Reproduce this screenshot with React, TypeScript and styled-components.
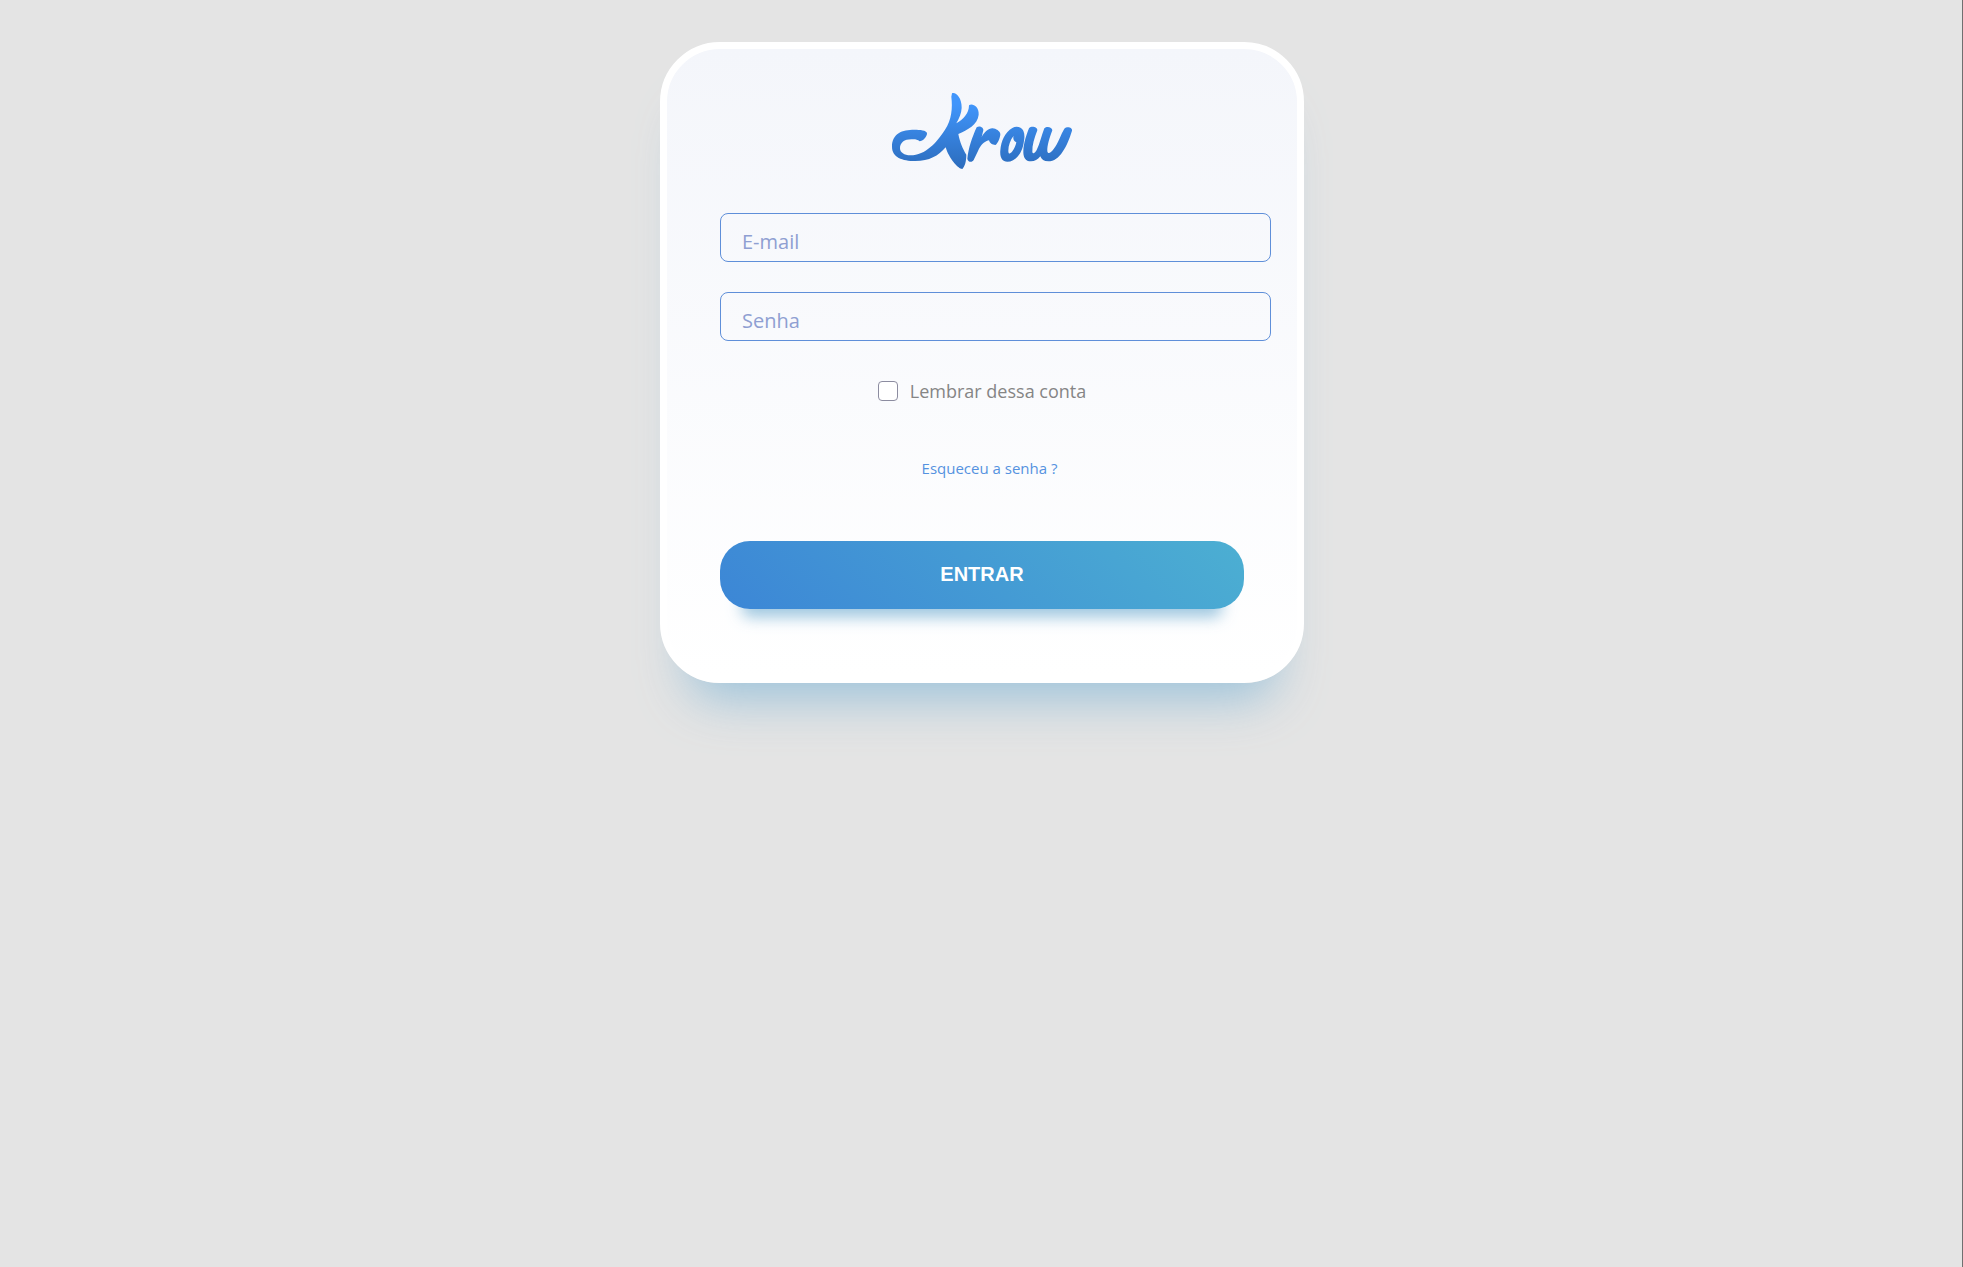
import React from "react";
import styled, { createGlobalStyle } from "styled-components";

const GlobalStyle = createGlobalStyle`
  * { box-sizing: border-box; }
  body { margin: 0; background: #e4e4e4; font-family: "Open Sans", "Noto Sans", sans-serif; }
`;

const Page = styled.main`
  min-height: 100vh;
  padding: 42px 15px 42px 17px;
  border-right: 1px solid #707070;
`;

const Card = styled.section`
  width: 100%;
  max-width: 644px;
  margin: 0 auto;
  padding: 31px 53px 67px;
  border: 7px solid #fff;
  border-radius: 60px;
  background: linear-gradient(0deg, #fff 0%, #f4f6fb 100%);
  box-shadow: 0 44px 48px -28px rgba(133, 184, 215, 0.75);
`;

const Logo = styled.svg`
  display: block;
  width: 200px;
  height: 100px;
  margin: 0 auto;
`;

const Form = styled.form`
  display: flex;
  flex-direction: column;
  margin-top: 33px;
`;

const Field = styled.input`
  height: 49px;
  margin: 0 -27px 30px 0;
  padding: 7px 21px 0;
  border: 1px solid #5f8fd9;
  border-radius: 8px;
  background: transparent;
  color: #3c5a99;
  font: 20px "Open Sans", "Noto Sans", sans-serif;

  &::placeholder {
    color: #8f9fd2;
    opacity: 1;
  }
`;

const Remember = styled.label`
  display: flex;
  align-items: center;
  justify-content: center;
  gap: 12px;
  height: 40px;
  color: #858585;
  font-size: 18px;
`;

const Check = styled.input`
  appearance: none;
  width: 20px;
  height: 20px;
  margin: 0;
  border: 1px solid #8c8ca0;
  border-radius: 4px;
  background: #fff;

  &:checked { background: #3d87d6; }
`;

const Forgot = styled.a`
  align-self: center;
  margin: 45px 0 0 15px;
  color: #5592e0;
  font-size: 15px;
  line-height: 24px;
  text-decoration: none;
`;

const Submit = styled.button`
  height: 68px;
  margin-top: 61px;
  padding: 0 0 2px;
  border: 0;
  border-radius: 30px;
  background: linear-gradient(45deg, #3c86d6 0%, #4cafd2 100%);
  box-shadow: 0 30px 15px -22px rgba(133, 184, 215, 0.8);
  color: #fff;
  font: bold 20px "Liberation Sans", Arial, sans-serif;
`;

export default function App() {
  return (
    <>
      <GlobalStyle />
      <Page>
        <Card>
          <Logo viewBox="6 0 600 300" role="img" aria-label="Krow">
            <defs>
              <linearGradient id="ink" gradientUnits="userSpaceOnUse" x1="0" y1="38" x2="0" y2="268">
                <stop offset="0.15" stopColor="#4095fb" />
                <stop offset="1" stopColor="#2c6cbc" />
              </linearGradient>
            </defs>
            <path
              fill="url(#ink)"
              d="M216 40C226 35 246 52 245 84C244 100 238 115 229 130C250 118 267 100 267 76C275 68 298 78 296 104C293 134 262 150 235 162C240 188 248 206 259 224C259 245 254 260 247 267C236 268 207 236 197 202C175 228 148 243 106 243C67 243 36 232 36 200C36 160 67 149 103 149C121 149 139 151 141 159C142 170 128 184 119 184C112 178 104 177 94 178C73 178 60 188 60 205C60 218 73 226 91 226C137 226 172 185 195 149C215 119 218 84 214 50Z"
            />
            <path
              fill="url(#ink)"
              d="M290 142C298 136 311 142 310 151L305 171C314 155 326 144 338 145C348 146 360 153 361 162C361 173 353 192 346 195C338 195 329 190 327 181C311 184 301 198 294 213L281 240C276 249 263 246 262 236C265 205 277 170 290 142Z"
            />
            <path
              fill="url(#ink)"
              fillRule="evenodd"
              d="M397 144C408 137 424 140 430 152C434 161 434 172 432 182C428 219 407 245 382 245C366 245 359 231 361 211C363 184 375 156 397 144ZM401 167C391 179 385 197 385 212C385 224 391 222 397 214C403 206 407 197 409 187C401 183 398 175 401 167Z"
            />
            <path
              fill="url(#ink)"
              d="M447 145C455 136 473 142 472 151C463 174 456 196 457 216C459 225 466 217 470 210C480 190 485 165 493 145C501 137 517 142 517 151C509 173 501 196 502 214C504 226 515 215 521 207C535 189 543 162 553 146C561 138 578 142 576 152C562 198 539 244 505 244C492 244 484 238 481 229C473 239 464 244 453 244C436 244 429 231 430 212C431 190 439 164 447 145Z"
            />
          </Logo>
          <Form onSubmit={(e) => e.preventDefault()}>
            <Field type="email" placeholder="E-mail" aria-label="E-mail" />
            <Field type="password" placeholder="Senha" aria-label="Senha" />
            <Remember>
              <Check type="checkbox" />
              Lembrar dessa conta
            </Remember>
            <Forgot href="#">Esqueceu a senha ?</Forgot>
            <Submit type="submit">ENTRAR</Submit>
          </Form>
        </Card>
      </Page>
    </>
  );
}
